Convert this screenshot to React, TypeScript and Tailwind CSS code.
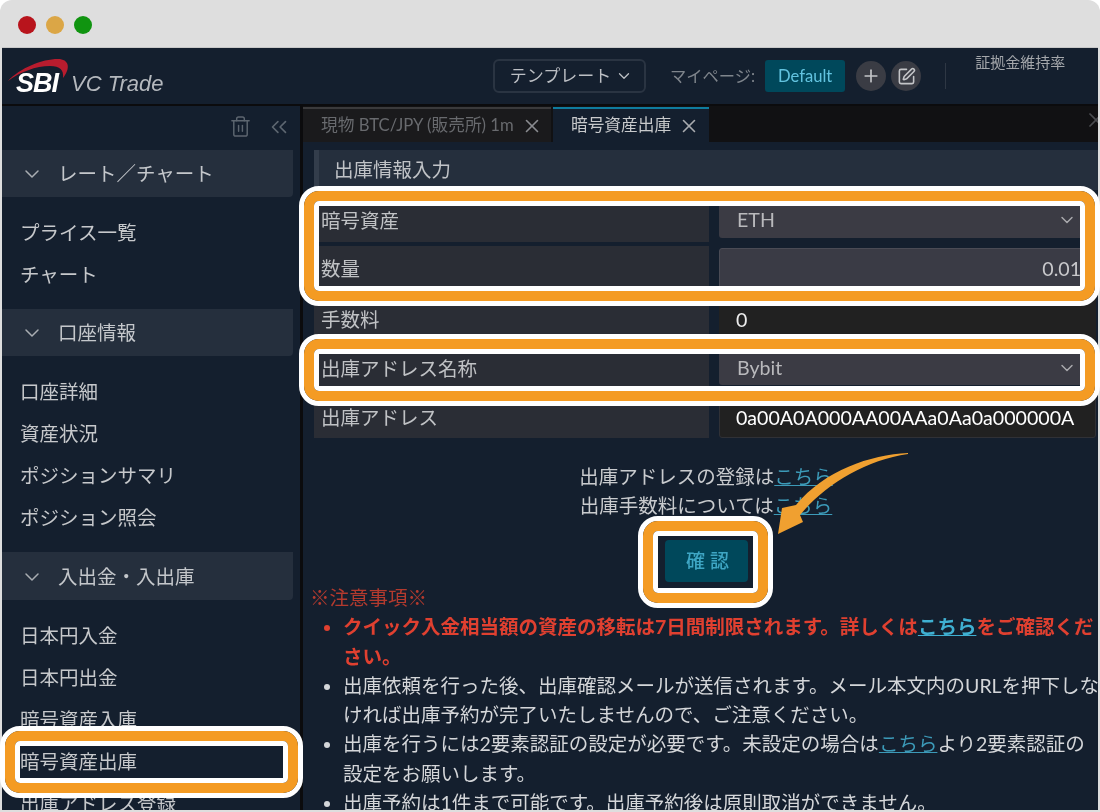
import React from 'react';
import { ChevronDown, ChevronsLeft, Plus, SquarePen, Trash2, X } from 'lucide-react';

const FONT = "font-['Lato','Noto_Sans_CJK_JP',sans-serif]";

const MenuSection: React.FC<{ title: string; items: string[]; tall?: boolean }> = ({ title, items, tall }) => (
  <div>
    <div className={`mr-[7px] flex items-center rounded-br bg-[#252f3d] pl-[18px] pt-px text-[19.5px] text-[#c4c7cb] ${tall ? 'h-[48px]' : 'h-[47px]'}`}>
      <ChevronDown className="mr-[14px] h-[24px] w-[24px] text-[#a9adb2]" strokeWidth={1.5} />
      {title}
    </div>
    <ul className="py-[14px] pl-[18px] text-[19.5px] text-[#c6c8cb]">
      {items.map((item) => (
        <li key={item} className="flex h-[42px] items-center pt-px">
          {item}
        </li>
      ))}
    </ul>
  </div>
);

const FormRow: React.FC<{ label: string; labelClass?: string; children: React.ReactNode }> = ({
  label,
  labelClass = 'pt-[4px]',
  children,
}) => (
  <div className="flex h-[45px] gap-[10px]">
    <div className={`flex w-[395px] shrink-0 items-center bg-[#2a2d35] pl-[7px] text-[19.5px] text-[#c0c2c5] ${labelClass}`}>{label}</div>
    {children}
  </div>
);

const SelectCell: React.FC<{ value: string; className?: string }> = ({ value, className = 'pt-px' }) => (
  <div className={`mb-[4px] mt-[5px] flex w-[377px] items-center justify-between rounded-[3px] bg-[#3b3b44] pl-[18px] pr-[19px] text-[19.6px] text-[#b9b9bc] ${className}`}>
    {value}
    <ChevronDown className="h-[20px] w-[20px] text-[#a9a9ad]" strokeWidth={1.75} />
  </div>
);

const Highlight: React.FC<{ className: string }> = ({ className }) => (
  <div className={`absolute rounded-[20px] border-[5px] border-white ${className}`}>
    <div className="h-full w-full rounded-[15px] border-[10px] border-[#f49b23]">
      <div className="h-full w-full rounded-[5px] border-[5px] border-white" />
    </div>
  </div>
);

export default function App() {
  return (
    <div className={`relative h-[812px] w-[1100px] overflow-hidden bg-white ${FONT}`}>
      <div className="flex h-full flex-col rounded-t-[12px] bg-[#dedede] px-[2px] pb-[2px]">
        <div className="flex h-[48px] shrink-0 items-start gap-[10px] border-b border-[#c8c8c8] pl-[16px] pt-[16px]">
          <span className="h-[18px] w-[18px] rounded-full bg-[#b8141c]" />
          <span className="h-[18px] w-[18px] rounded-full bg-[#dba646]" />
          <span className="h-[18px] w-[18px] rounded-full bg-[#109410]" />
        </div>

        <div className="flex min-h-0 flex-1 flex-col overflow-hidden bg-[#141f2e] blur-[0.5px]">
          <header className="flex h-[58px] shrink-0 items-center border-b-2 border-[#0b0b0d]">
            <div className="relative flex h-[50px] w-[491px] items-end pb-[4px] pl-[14px]">
              <svg className="absolute left-0 top-[-3px]" width="80" height="40" viewBox="0 0 80 40">
                <path d="M6 33 C 18 20, 40 11, 56 11 C 67 11, 69 20, 61 30 C 62 22, 58 18, 48 18 C 34 18, 18 24, 6 33 Z" fill="#b81c2e" />
              </svg>
              <span className="relative font-['Liberation_Sans',sans-serif] text-[27px] font-bold italic leading-[28px] tracking-[-1px] text-white">SBI</span>
              <span className="ml-[13px] font-['Liberation_Sans',sans-serif] text-[22px] italic leading-[26px] text-[#b4b8bd]">VC Trade</span>
            </div>
            <button className="flex h-[34px] w-[153px] items-center justify-center gap-[4px] rounded-md border-2 border-[#2a3442] pl-[4px] text-[17px] text-[#bcbfc4]">
              テンプレート
              <ChevronDown className="h-[18px] w-[18px]" strokeWidth={1.75} />
            </button>
            <span className="ml-[24px] text-[16.3px] text-[#7f858c]">マイページ:</span>
            <button className="ml-[10px] h-[32px] w-[80px] rounded-[3px] bg-[#00485b] text-[16.6px] text-[#62c3df]">Default</button>
            <span className="ml-[11px] flex h-[30px] w-[30px] items-center justify-center rounded-full bg-[#3a3c44] text-[#c4c5c8]">
              <Plus className="h-[20px] w-[20px]" strokeWidth={2} />
            </span>
            <span className="ml-[5px] flex h-[30px] w-[30px] items-center justify-center rounded-full bg-[#3a3c44] text-[#c4c5c8]">
              <SquarePen className="h-[19px] w-[19px]" strokeWidth={2} />
            </span>
            <span className="ml-[24px] h-[26px] w-px bg-[#2e3744]" />
            <span className="mb-[28px] ml-[29px] text-[15px] leading-[20px] text-[#a4a7ab]">証拠金維持率</span>
          </header>

          <div className="flex min-h-0 flex-1">
            <aside className="w-[301px] shrink-0 overflow-hidden border-r-[3px] border-[#0b0b0d]">
              <div className="flex h-[44px] items-center justify-end gap-[14px] pb-[3px] pr-[8px] text-[#5d6670]">
                <Trash2 className="h-[23px] w-[23px]" strokeWidth={1.5} />
                <ChevronsLeft className="h-[26px] w-[26px]" strokeWidth={1.5} />
              </div>
              <MenuSection title="レート／チャート" items={['プライス一覧', 'チャート']} />
              <MenuSection title="口座情報" items={['口座詳細', '資産状況', 'ポジションサマリ', 'ポジション照会']} />
              <MenuSection title="入出金・入出庫" tall items={['日本円入金', '日本円出金', '暗号資産入庫', '暗号資産出庫', '出庫アドレス登録']} />
            </aside>

            <main className="min-w-0 flex-1 overflow-hidden">
              <div className="relative flex h-[36px] bg-[#111113] pt-px">
                <div className="flex w-[248px] items-center border-t-2 border-[#3a3a3c] bg-[#1a1a1c] pl-[18px] text-[16.7px] text-[#686a6e]">
                  現物 BTC/JPY (販売所) 1m
                  <X className="ml-[7px] h-[22px] w-[22px] text-[#8a8c90]" strokeWidth={1.75} />
                </div>
                <div className="ml-[2px] flex w-[156px] items-center border-t-2 border-[#0f7c9e] bg-[#141f2e] pl-[18px] text-[16.7px] text-[#c8cacc]">
                  暗号資産出庫
                  <X className="ml-[7px] h-[22px] w-[22px] text-[#a9abaf]" strokeWidth={1.75} />
                </div>
                <X className="absolute right-[-10px] top-[2px] h-[24px] w-[24px] text-[#4a4c50]" strokeWidth={1.75} />
              </div>

              <div className="ml-[11px] pt-[8px]">
                <div className="flex h-[40px] items-center border-l-[5px] border-[#333d4b] bg-[#252f3d] pl-[15px] text-[19.5px] text-[#c0c3c7]">出庫情報入力</div>

                <div className="mt-[7px] flex w-[782px] flex-col gap-[4px]">
                  <FormRow label="暗号資産" labelClass="pt-[2px]">
                    <SelectCell value="ETH" className="" />
                  </FormRow>
                  <FormRow label="数量" labelClass="pt-0">
                    <div className="my-[2px] flex w-[377px] items-center justify-end rounded-[3px] border border-[#4a4b55] bg-[#3a3b45] pr-[14px] text-[19.6px] text-[#c9c9cc]">0.01</div>
                  </FormRow>
                  <FormRow label="手数料">
                    <div className="flex w-[377px] items-center bg-[#212121] pl-[17px] pt-[4px] text-[19.6px] text-[#ececec]">0</div>
                  </FormRow>
                  <FormRow label="出庫アドレス名称">
                    <SelectCell value="Bybit" />
                  </FormRow>
                  <FormRow label="出庫アドレス">
                    <div className="flex w-[377px] items-center rounded-[3px] border border-[#303136] bg-[#212121] pl-[16px] pt-[4px] text-[19.6px] text-white">0a00A0A000AA00AAa0Aa0a000000A</div>
                  </FormRow>
                </div>

                <div className="mt-[24px] text-center text-[19.5px] leading-[29px] text-[#c9cbce]">
                  <p>
                    出庫アドレスの登録は<a className="text-[#3c9ab8] underline">こちら</a>
                  </p>
                  <p>
                    出庫手数料については<a className="text-[#3c9ab8] underline">こちら</a>
                  </p>
                </div>

                <div className="mt-[20px] flex justify-center">
                  <button className="h-[42px] w-[83px] rounded-[4px] bg-[#00485b] pl-[8px] text-[19px] font-medium tracking-[5px] text-[#3ea6c4]">確認</button>
                </div>

                <p className="-ml-[4px] pt-[1px] text-[19.5px] leading-[29.3px] text-[#b33a2e]">※注意事項※</p>
                <ul className="w-[788px] list-disc pl-[29px] text-[19.5px] leading-[29.3px] text-[#d4d6d9]">
                  <li className="font-bold text-[#e04030]">
                    クイック入金相当額の資産の移転は7日間制限されます。詳しくは<a className="text-[#3fb0d2] underline">こちら</a>をご確認ください。
                  </li>
                  <li>出庫依頼を行った後、出庫確認メールが送信されます。メール本文内のURLを押下しなければ出庫予約が完了いたしませんので、ご注意ください。</li>
                  <li>
                    出庫を行うには2要素認証の設定が必要です。未設定の場合は<a className="text-[#3c9ab8] underline">こちら</a>より2要素認証の設定をお願いします。
                  </li>
                  <li>出庫予約は1件まで可能です。出庫予約後は原則取消ができません。</li>
                </ul>
              </div>
            </main>
          </div>
        </div>
      </div>

      <Highlight className="left-[299px] top-[186px] h-[120px] w-[801px]" />
      <Highlight className="left-[299px] top-[334px] h-[72px] w-[801px]" />
      <Highlight className="left-[638px] top-[516px] h-[92px] w-[135px]" />
      <Highlight className="left-0 top-[726px] h-[72px] w-[303px]" />

      <svg className="pointer-events-none absolute left-[770px] top-[445px]" width="150" height="100" viewBox="770 445 150 100">
        <path d="M908 453 C 870 455 825 470 796 505 L 782 508 L 778 534 L 803 522 L 800 515 C 825 485 865 460 908 454 Z" fill="#f0a030" />
      </svg>
    </div>
  );
}
